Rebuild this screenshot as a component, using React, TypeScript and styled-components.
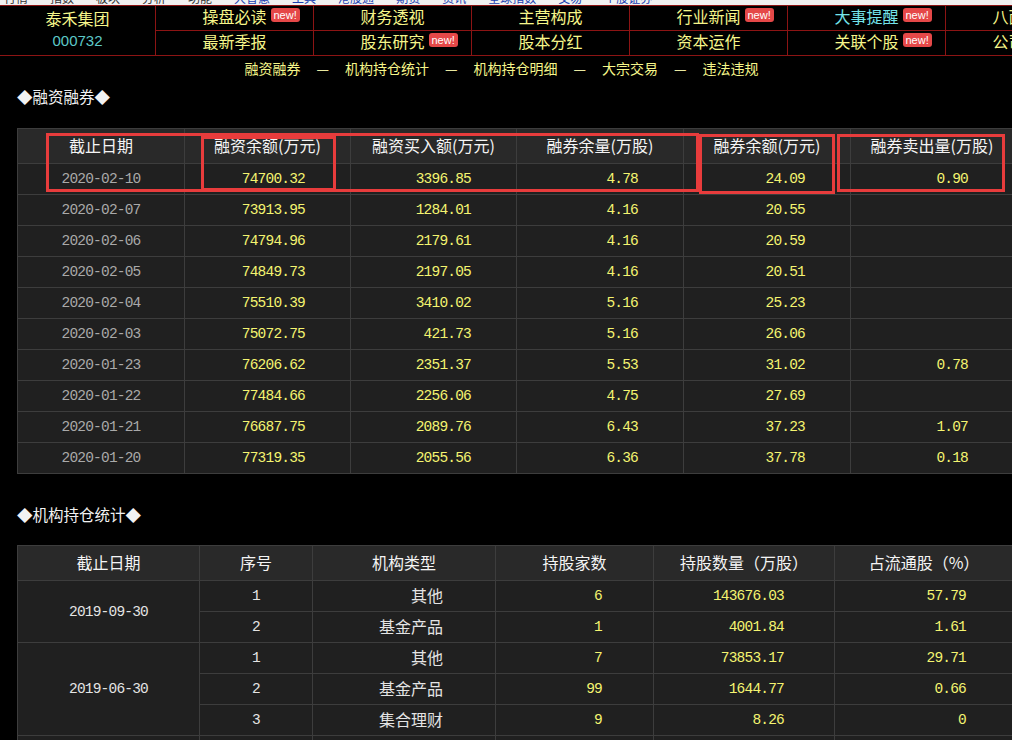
import { Fragment } from "react";
import styled, { createGlobalStyle } from "styled-components";

const GlobalStyle = createGlobalStyle`
  html, body {
    margin: 0;
    padding: 0;
    background: #000;
    overflow: hidden;
  }
  body {
    font-family: "Noto Sans CJK SC", "Liberation Sans", sans-serif;
  }
`

const Page = styled.div`
  position: relative;
  width: 1012px;
  height: 740px;
  overflow: hidden;
  background: #000;
`

const TopStrip = styled.div`
  height: 5px;
  overflow: hidden;
  background: #f1f1f1;
  display: flex;
  gap: 22px;
  padding-left: 4px;
  font-size: 12px;
  line-height: 12px;
  font-family: "Noto Sans CJK SC", sans-serif;
`

const StripItem = styled.span<{ $blue?: boolean }>`
  margin-top: -8px;
  color: ${p => p.$blue ? '#1c3fb0' : '#333'};
  white-space: nowrap;
`

const Nav = styled.div`
  display: grid;
  grid-template-columns: 155px repeat(6, 157px);
  grid-template-rows: 24px 24px;
  gap: 1px;
  padding: 1px 0;
  background: #8c1414;
  width: 1110px;
`

const StockCell = styled.div`
  grid-row: span 2;
  background: #000;
  display: flex;
  flex-direction: column;
  align-items: center;
  justify-content: space-around;
  padding: 0 0 3px;
`

const StockName = styled.div`
  color: #f6f68a;
  font-size: 16px;
  line-height: 22px;
`

const StockCode = styled.div`
  color: #5cc8c8;
  font-size: 15px;
  line-height: 22px;
  font-family: "Liberation Sans", sans-serif;
`

const NavCell = styled.div<{ $cyan?: boolean }>`
  background: #000;
  display: flex;
  align-items: center;
  justify-content: center;
  padding-bottom: 4px;
  color: ${p => p.$cyan ? '#74e4ea' : '#f6f68a'};
  font-size: 16px;
  white-space: nowrap;
`

const NavLabel = styled.span`
  position: relative;
`

const NewBadge = styled.span`
  position: absolute;
  left: calc(100% + 4px);
  top: 4px;
  background: #e54848;
  color: #fff;
  font-family: "Liberation Sans", sans-serif;
  font-size: 11px;
  line-height: 14px;
  padding: 0 3px;
  border-radius: 3px;
`

const SubLinks = styled.div`
  height: 24px;
  display: flex;
  align-items: center;
  justify-content: center;
  gap: 16px;
  padding-right: 9px;
  padding-bottom: 2px;
  color: #f6f68a;
  font-size: 14px;
`

const Dash = styled.span`
  color: #e8e8a0;
`

const SectionTitle = styled.div<{ $top: number }>`
  margin: ${p => p.$top}px 0 0 17px;
  color: #f2f2f2;
  font-size: 15.5px;
  line-height: 20px;
  height: 20px;
`

const Grid = styled.table<{ $top: number }>`
  margin: ${p => p.$top}px 0 0 17px;
  border-collapse: collapse;
  table-layout: fixed;
  width: 996px;
  background: #202020;
  border: 1px solid #3d3d3d;
`

const HeadCell = styled.th`
  height: 31px;
  padding: 0 0 3px;
  background: #292929;
  border: 1px solid #3d3d3d;
  color: #f4f4f4;
  font-weight: normal;
  font-size: 16px;
  text-align: center;
  white-space: nowrap;
`

const Cell = styled.td<{ $tone?: 'date' | 'num' | 'text' | 'plain'; $align?: 'center' | 'right'; $pad?: number }>`
  height: ${p => p.$tone === 'text' ? 27 : 30}px;
  padding: 0 ${p => p.$pad ?? 0}px ${p => p.$tone === 'text' ? 3 : 0}px 0;
  border: 1px solid #3d3d3d;
  text-align: ${p => p.$align ?? 'center'};
  white-space: nowrap;
  font-size: ${p => p.$tone === 'text' ? '16px' : '14.5px'};
  letter-spacing: ${p => p.$tone === 'text' ? 0 : -0.8}px;
  font-family: ${p => p.$tone === 'text'
    ? '"Noto Sans CJK SC", sans-serif'
    : '"Liberation Mono", monospace'};
  color: ${p => p.$tone === 'num' ? '#f4f470' : p.$tone === 'date' ? '#a9a9a9' : '#e4e4e4'};
`

const Marker = styled.div<{ $x: number; $y: number; $w: number; $h: number }>`
  position: absolute;
  left: ${p => p.$x}px;
  top: ${p => p.$y}px;
  width: ${p => p.$w}px;
  height: ${p => p.$h}px;
  border: 3px solid #e83c3c;
  box-sizing: border-box;
  pointer-events: none;
`

const navTop = [
  { label: '操盘必读', isNew: true },
  { label: '财务透视' },
  { label: '主营构成' },
  { label: '行业新闻', isNew: true },
  { label: '大事提醒', isNew: true, cyan: true },
  { label: '八面来风' },
]

const navBottom = [
  { label: '最新季报' },
  { label: '股东研究', isNew: true },
  { label: '股本分红' },
  { label: '资本运作' },
  { label: '关联个股', isNew: true },
  { label: '公司概况' },
]

const links = ['融资融券', '机构持仓统计', '机构持仓明细', '大宗交易', '违法违规']

const marginRows = [
  ['2020-02-10', '74700.32', '3396.85', '4.78', '24.09', '0.90'],
  ['2020-02-07', '73913.95', '1284.01', '4.16', '20.55', ''],
  ['2020-02-06', '74794.96', '2179.61', '4.16', '20.59', ''],
  ['2020-02-05', '74849.73', '2197.05', '4.16', '20.51', ''],
  ['2020-02-04', '75510.39', '3410.02', '5.16', '25.23', ''],
  ['2020-02-03', '75072.75', '421.73', '5.16', '26.06', ''],
  ['2020-01-23', '76206.62', '2351.37', '5.53', '31.02', '0.78'],
  ['2020-01-22', '77484.66', '2256.06', '4.75', '27.69', ''],
  ['2020-01-21', '76687.75', '2089.76', '6.43', '37.23', '1.07'],
  ['2020-01-20', '77319.35', '2055.56', '6.36', '37.78', '0.18'],
]

const marginHead = ['截止日期', '融资余额(万元)', '融资买入额(万元)', '融券余量(万股)', '融券余额(万元)', '融券卖出量(万股)']

const holdHead = ['截止日期', '序号', '机构类型', '持股家数', '持股数量（万股）', '占流通股（%）']
const holdCols = [182, 113, 183, 158, 181, 179]

const holdings = [
  {
    date: '2019-09-30',
    rows: [
      ['1', '其他', '6', '143676.03', '57.79'],
      ['2', '基金产品', '1', '4001.84', '1.61'],
    ],
  },
  {
    date: '2019-06-30',
    rows: [
      ['1', '其他', '7', '73853.17', '29.71'],
      ['2', '基金产品', '99', '1644.77', '0.66'],
      ['3', '集合理财', '9', '8.26', '0'],
    ],
  },
  {
    date: '2019-03-31',
    rows: [
      ['1', '其他', '6', '143676.03', '57.79'],
      ['2', '基金产品', '12', '3120.45', '1.26'],
    ],
  },
]

type NavItem = { label: string; isNew?: boolean; cyan?: boolean }

const NavEntry = ({ item }: { item: NavItem }) => (
  <NavCell $cyan={item.cyan}>
    <NavLabel>
      {item.label}
      {item.isNew && <NewBadge>new!</NewBadge>}
    </NavLabel>
  </NavCell>
)

export default function App() {
  return (
    <Page>
      <GlobalStyle />
      <TopStrip>
        {['行情', '指数', '板块', '分析', '功能', '大智慧', '工具', '港股通', '期货', '资讯', '全球指数', '交易', '个股证券'].map((s, i) => (
          <StripItem key={s} $blue={i > 4}>{s}</StripItem>
        ))}
      </TopStrip>

      <Nav>
        <StockCell>
          <StockName>泰禾集团</StockName>
          <StockCode>000732</StockCode>
        </StockCell>
        {navTop.map(n => <NavEntry key={n.label} item={n} />)}
        {navBottom.map(n => <NavEntry key={n.label} item={n} />)}
      </Nav>

      <SubLinks>
        {links.map((l, i) => (
          <Fragment key={l}>
            {i > 0 && <Dash>—</Dash>}
            <span>{l}</span>
          </Fragment>
        ))}
      </SubLinks>

      <SectionTitle $top={4}>◆融资融券◆</SectionTitle>
      <Grid $top={22}>
        <colgroup>
          {[167, 166, 166, 167, 167, 163].map((w, i) => <col key={i} style={{ width: w }} />)}
        </colgroup>
        <thead>
          <tr>
            {marginHead.map(h => <HeadCell key={h}>{h}</HeadCell>)}
          </tr>
        </thead>
        <tbody>
          {marginRows.map(r => (
            <tr key={r[0]}>
              <Cell $tone="date">{r[0]}</Cell>
              {r.slice(1).map((v, i) => (
                <Cell key={i} $tone="num" $align="right" $pad={45}>{v}</Cell>
              ))}
            </tr>
          ))}
        </tbody>
      </Grid>

      <SectionTitle $top={30}>◆机构持仓统计◆</SectionTitle>
      <Grid $top={21}>
        <colgroup>
          {holdCols.map((w, i) => <col key={i} style={{ width: w }} />)}
        </colgroup>
        <thead>
          <tr>
            {holdHead.map(h => <HeadCell key={h}>{h}</HeadCell>)}
          </tr>
        </thead>
        <tbody>
          {holdings.map(g => g.rows.map((r, i) => (
            <tr key={g.date + i}>
              {i === 0 && <Cell rowSpan={g.rows.length} $tone="plain">{g.date}</Cell>}
              <Cell $tone="plain">{r[0]}</Cell>
              <Cell $tone="text" $align="right" $pad={52}>{r[1]}</Cell>
              <Cell $tone="num" $align="right" $pad={51}>{r[2]}</Cell>
              <Cell $tone="num" $align="right" $pad={50}>{r[3]}</Cell>
              <Cell $tone="num" $align="right" $pad={47}>{r[4]}</Cell>
            </tr>
          )))}
        </tbody>
      </Grid>

      <Marker $x={46} $y={133} $w={653} $h={59} />
      <Marker $x={201} $y={136} $w={135} $h={55} />
      <Marker $x={699} $y={134} $w={136} $h={60} />
      <Marker $x={837} $y={134} $w={168} $h={58} />
    </Page>
  )
}
